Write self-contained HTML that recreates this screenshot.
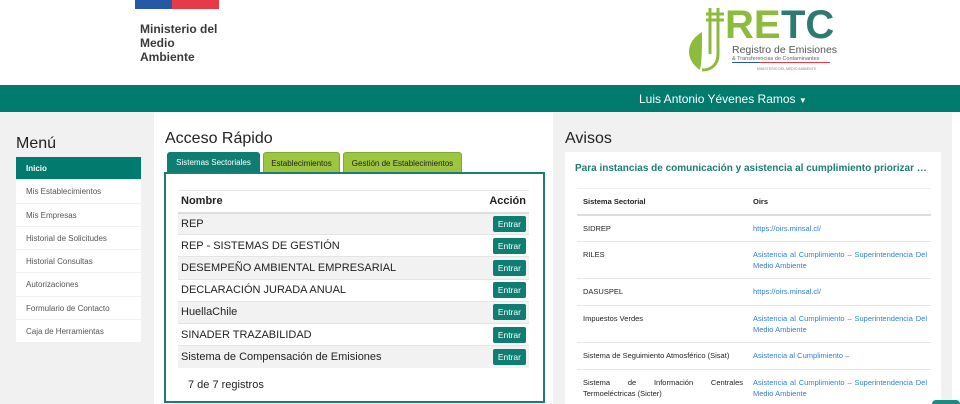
<!DOCTYPE html>
<html style="overflow:hidden;width:960px;height:404px"><head><meta charset="utf-8"><style>
*{margin:0;padding:0;box-sizing:border-box}
body{width:960px;height:404px;overflow:hidden;background:#fff;font-family:"Liberation Sans",sans-serif;position:relative;color:#222}
.abs{position:absolute}
.band{left:0;top:85px;width:960px;height:27px;background:#007b6e}
.user{left:639px;top:92px;color:#fff;font-size:12px}
.lg{left:0;top:112px;width:154px;height:292px;background:#f1f1f1}
.rg{left:553px;top:112px;width:399px;height:292px;background:#f1f1f1}
.menu{left:16px;top:157px;width:125px}
.menu div{height:23.3px;background:#fff;font-size:8px;color:#555;padding:7px 0 0 10px;border-bottom:1px solid #f1f1f1}
.menu div.on{background:#007b6e;color:#fff;font-weight:bold}
h2{font-weight:normal;font-size:16px;position:absolute}
.tab{top:152px;height:21px;font-size:8px;text-align:center;padding-top:6px;border-radius:3px 3px 0 0;color:#222}
.box{left:164px;top:172px;width:381px;height:231px;border:2px solid #1d7d73;background:#fff}
table{border-collapse:collapse}
.t1{position:absolute;left:178px;top:190px;width:351px;font-size:11px}
.t1 td{height:22.2px;padding:0 3px;border-top:1px solid #e4e4e4}
.t1 tr:nth-child(even) td{background:#f2f2f2}
.t1 th{text-align:left;height:22px;padding:0 3px;font-size:11px;border-top:1px solid #e8e8e8;border-bottom:2px solid #ddd}
.btn{display:inline-block;background:#0e7d72;color:#fff;font-size:8.5px;padding:3px 5px;border-radius:2px;float:right}
.card{left:565px;top:152px;width:376px;height:252px;background:#fff}
.t2{position:absolute;left:577px;top:188px;width:354px;font-size:7.5px}
.t2 td,.t2 th{vertical-align:top;padding:0 4px 0 6px;border-bottom:1px solid #e6e6e6;text-align:left}
.t2 th{height:26px;padding-top:8px;border-top:1px solid #eee;border-bottom:2px solid #ddd}
.t2 td{padding-top:8px;line-height:10.5px}
.t2 a{color:#2f7fd6;text-decoration:none;text-align:justify;display:block}
</style></head><body>
<div class="abs" style="left:135px;top:0;width:37px;height:9px;background:#2559a8"></div>
<div class="abs" style="left:172px;top:0;width:47px;height:9px;background:#e63a46"></div>
<div class="abs" style="left:140px;top:22px;font-size:12px;font-weight:bold;line-height:14px;color:#3a3a3a">Ministerio del<br>Medio<br>Ambiente</div>
<svg class="abs" style="left:680px;top:0" width="160" height="75">
<path d="M20 70 C5 60 5 42 22 32 C22 48 22 60 20 70Z" fill="#8dbb3c"/>
<path d="M22 70 C32 70 38 64 38 54 L38 8 M30 8 L30 54 M26 14 L44 14 M26 20 L44 20" stroke="#8dbb3c" stroke-width="3" fill="none"/>
<text x="45" y="38" font-family="Liberation Sans" font-size="40" font-weight="bold" fill="#8dbb3c">RE</text>
<text x="101" y="38" font-family="Liberation Sans" font-size="40" font-weight="bold" fill="#2d7a6f">TC</text>
<text x="52" y="53" font-family="Liberation Sans" font-size="10.5" fill="#555">Registro de Emisiones</text>
<text x="52" y="60" font-family="Liberation Sans" font-size="5.5" fill="#666">&amp; Transferencias de Contaminantes</text>
<rect x="52" y="62" width="98" height="1" fill="#2559a8"/><rect x="80" y="62" width="70" height="1" fill="#e63a46"/>
<text x="77" y="70" font-family="Liberation Sans" font-size="3.5" fill="#888">MINISTERIO DEL MEDIO AMBIENTE</text>
</svg>
<div class="abs band"></div>
<div class="abs user">Luis Antonio Yévenes Ramos <span style="font-size:8px">▼</span></div>
<div class="abs lg"></div><div class="abs rg"></div>
<h2 style="left:16px;top:135px">Menú</h2>
<div class="abs menu"><div class="on">Inicio</div><div>Mis Establecimientos</div><div>Mis Empresas</div><div>Historial de Solicitudes</div><div>Historial Consultas</div><div>Autorizaciones</div><div>Formulario de Contacto</div><div>Caja de Herramientas</div></div>
<h2 style="left:165px;top:130px">Acceso Rápido</h2>
<div class="abs tab" style="left:167px;width:93px;background:#0e7d72;color:#fff;height:22px">Sistemas Sectoriales</div>
<div class="abs tab" style="left:263px;width:77px;background:#9cc540;border:1px solid #7fa83a">Establecimientos</div>
<div class="abs tab" style="left:343px;width:119px;background:#9cc540;border:1px solid #7fa83a">Gestión de Establecimientos</div>
<div class="abs box"></div>
<table class="t1"><tr><th>Nombre</th><th style="text-align:right">Acción</th></tr>
<tr><td>REP</td><td><span class="btn">Entrar</span></td></tr>
<tr><td>REP - SISTEMAS DE GESTIÓN</td><td><span class="btn">Entrar</span></td></tr>
<tr><td>DESEMPEÑO AMBIENTAL EMPRESARIAL</td><td><span class="btn">Entrar</span></td></tr>
<tr><td>DECLARACIÓN JURADA ANUAL</td><td><span class="btn">Entrar</span></td></tr>
<tr><td>HuellaChile</td><td><span class="btn">Entrar</span></td></tr>
<tr><td>SINADER TRAZABILIDAD</td><td><span class="btn">Entrar</span></td></tr>
<tr><td>Sistema de Compensación de Emisiones</td><td><span class="btn">Entrar</span></td></tr></table>
<div class="abs" style="left:188px;top:379px;font-size:11px">7 de 7 registros</div>
<h2 style="left:565px;top:130px">Avisos</h2>
<div class="abs card"></div>
<div class="abs" style="left:575px;top:163px;width:357px;white-space:nowrap;overflow:hidden;text-overflow:ellipsis;font-size:10px;font-weight:bold;color:#1d7d73">Para instancias de comunicación y asistencia al cumplimiento priorizar canales</div>
<table class="t2"><colgroup><col style="width:170px"><col></colgroup>
<tr><th>Sistema Sectorial</th><th>Oirs</th></tr>
<tr><td style="height:27px">SIDREP</td><td><a>https://oirs.minsal.cl/</a></td></tr>
<tr><td style="height:37px">RILES</td><td><a>Asistencia al Cumplimiento – Superintendencia Del Medio Ambiente</a></td></tr>
<tr><td style="height:27px">DASUSPEL</td><td><a>https://oirs.minsal.cl/</a></td></tr>
<tr><td style="height:37px">Impuestos Verdes</td><td><a>Asistencia al Cumplimiento – Superintendencia Del Medio Ambiente</a></td></tr>
<tr><td style="height:27px">Sistema de Seguimiento Atmosférico (Sisat)</td><td><a>Asistencia al Cumplimiento –</a></td></tr>
<tr><td style="text-align:justify;height:37px">Sistema de Información Centrales Termoeléctricas (Sicter)</td><td><a>Asistencia al Cumplimiento – Superintendencia Del Medio Ambiente</a></td></tr>
</table>
<div class="abs" style="left:932px;top:400px;width:28px;height:4px;border-radius:14px 14px 0 0;background:#1d8c80"></div>
</body></html>
